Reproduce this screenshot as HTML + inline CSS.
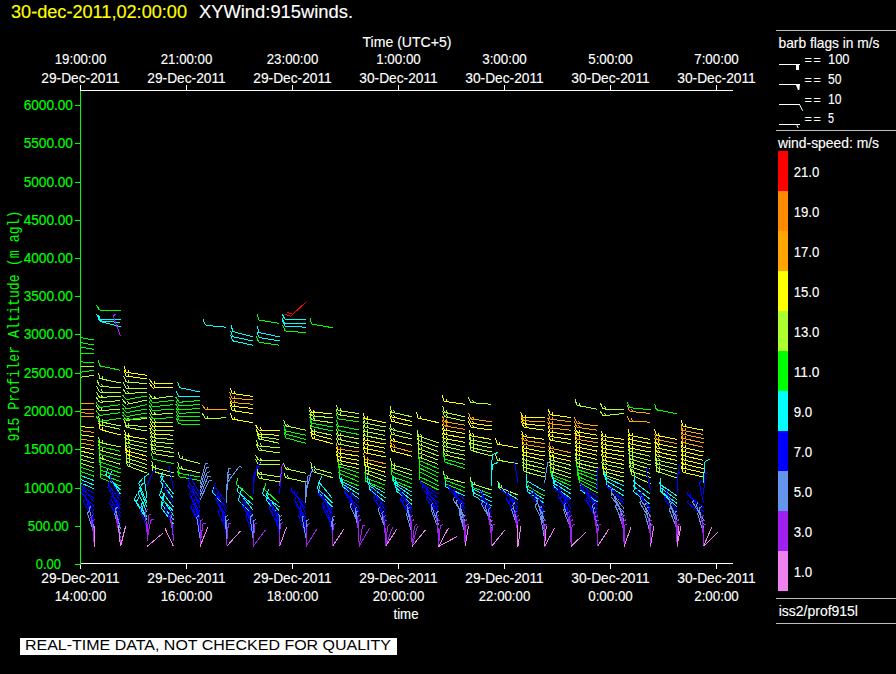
<!DOCTYPE html>
<html><head><meta charset="utf-8"><title>XYWind:915winds</title>
<style>
html,body{margin:0;padding:0;background:#000;overflow:hidden}
svg{display:block;font-family:"Liberation Sans", sans-serif;}
</style></head>
<body>
<svg width="896" height="674" viewBox="0 0 896 674">
<rect width="896" height="674" fill="#000"/>
<text x="11" y="17.5" font-size="18" fill="#ffff00" stroke="#ffff00" stroke-width="0.15" textLength="176" lengthAdjust="spacingAndGlyphs">30-dec-2011,02:00:00</text>
<text x="199" y="17.5" font-size="18" fill="#fff" stroke="#fff" stroke-width="0.15" textLength="154" lengthAdjust="spacingAndGlyphs">XYWind:915winds.</text>
<text x="362.5" y="47" font-size="15" fill="#fff" stroke="#fff" stroke-width="0.15" textLength="89" lengthAdjust="spacingAndGlyphs">Time (UTC+5)</text>
<text x="80.5" y="64" font-size="15" fill="#fff" stroke="#fff" stroke-width="0.15" text-anchor="middle" textLength="51.5" lengthAdjust="spacingAndGlyphs">19:00:00</text>
<text x="80.5" y="83" font-size="15" fill="#fff" stroke="#fff" stroke-width="0.15" text-anchor="middle" textLength="78.5" lengthAdjust="spacingAndGlyphs">29-Dec-2011</text>
<rect x="80" y="85" width="1" height="5" fill="#fff"/>
<text x="186.5" y="64" font-size="15" fill="#fff" stroke="#fff" stroke-width="0.15" text-anchor="middle" textLength="51.5" lengthAdjust="spacingAndGlyphs">21:00:00</text>
<text x="186.5" y="83" font-size="15" fill="#fff" stroke="#fff" stroke-width="0.15" text-anchor="middle" textLength="78.5" lengthAdjust="spacingAndGlyphs">29-Dec-2011</text>
<rect x="186" y="85" width="1" height="5" fill="#fff"/>
<text x="292.5" y="64" font-size="15" fill="#fff" stroke="#fff" stroke-width="0.15" text-anchor="middle" textLength="51.5" lengthAdjust="spacingAndGlyphs">23:00:00</text>
<text x="292.5" y="83" font-size="15" fill="#fff" stroke="#fff" stroke-width="0.15" text-anchor="middle" textLength="78.5" lengthAdjust="spacingAndGlyphs">29-Dec-2011</text>
<rect x="292" y="85" width="1" height="5" fill="#fff"/>
<text x="398.5" y="64" font-size="15" fill="#fff" stroke="#fff" stroke-width="0.15" text-anchor="middle" textLength="44.5" lengthAdjust="spacingAndGlyphs">1:00:00</text>
<text x="398.5" y="83" font-size="15" fill="#fff" stroke="#fff" stroke-width="0.15" text-anchor="middle" textLength="78.5" lengthAdjust="spacingAndGlyphs">30-Dec-2011</text>
<rect x="398" y="85" width="1" height="5" fill="#fff"/>
<text x="504.5" y="64" font-size="15" fill="#fff" stroke="#fff" stroke-width="0.15" text-anchor="middle" textLength="44.5" lengthAdjust="spacingAndGlyphs">3:00:00</text>
<text x="504.5" y="83" font-size="15" fill="#fff" stroke="#fff" stroke-width="0.15" text-anchor="middle" textLength="78.5" lengthAdjust="spacingAndGlyphs">30-Dec-2011</text>
<rect x="504" y="85" width="1" height="5" fill="#fff"/>
<text x="610.5" y="64" font-size="15" fill="#fff" stroke="#fff" stroke-width="0.15" text-anchor="middle" textLength="44.5" lengthAdjust="spacingAndGlyphs">5:00:00</text>
<text x="610.5" y="83" font-size="15" fill="#fff" stroke="#fff" stroke-width="0.15" text-anchor="middle" textLength="78.5" lengthAdjust="spacingAndGlyphs">30-Dec-2011</text>
<rect x="610" y="85" width="1" height="5" fill="#fff"/>
<text x="716.5" y="64" font-size="15" fill="#fff" stroke="#fff" stroke-width="0.15" text-anchor="middle" textLength="44.5" lengthAdjust="spacingAndGlyphs">7:00:00</text>
<text x="716.5" y="83" font-size="15" fill="#fff" stroke="#fff" stroke-width="0.15" text-anchor="middle" textLength="78.5" lengthAdjust="spacingAndGlyphs">30-Dec-2011</text>
<rect x="716" y="85" width="1" height="5" fill="#fff"/>
<rect x="80" y="90" width="653" height="1" fill="#fff"/>
<text x="80.5" y="582.5" font-size="15" fill="#fff" stroke="#fff" stroke-width="0.15" text-anchor="middle" textLength="78.5" lengthAdjust="spacingAndGlyphs">29-Dec-2011</text>
<text x="80.5" y="600.5" font-size="15" fill="#fff" stroke="#fff" stroke-width="0.15" text-anchor="middle" textLength="51.5" lengthAdjust="spacingAndGlyphs">14:00:00</text>
<rect x="80" y="563" width="1" height="6" fill="#fff"/>
<text x="186.5" y="582.5" font-size="15" fill="#fff" stroke="#fff" stroke-width="0.15" text-anchor="middle" textLength="78.5" lengthAdjust="spacingAndGlyphs">29-Dec-2011</text>
<text x="186.5" y="600.5" font-size="15" fill="#fff" stroke="#fff" stroke-width="0.15" text-anchor="middle" textLength="51.5" lengthAdjust="spacingAndGlyphs">16:00:00</text>
<rect x="186" y="563" width="1" height="6" fill="#fff"/>
<text x="292.5" y="582.5" font-size="15" fill="#fff" stroke="#fff" stroke-width="0.15" text-anchor="middle" textLength="78.5" lengthAdjust="spacingAndGlyphs">29-Dec-2011</text>
<text x="292.5" y="600.5" font-size="15" fill="#fff" stroke="#fff" stroke-width="0.15" text-anchor="middle" textLength="51.5" lengthAdjust="spacingAndGlyphs">18:00:00</text>
<rect x="292" y="563" width="1" height="6" fill="#fff"/>
<text x="398.5" y="582.5" font-size="15" fill="#fff" stroke="#fff" stroke-width="0.15" text-anchor="middle" textLength="78.5" lengthAdjust="spacingAndGlyphs">29-Dec-2011</text>
<text x="398.5" y="600.5" font-size="15" fill="#fff" stroke="#fff" stroke-width="0.15" text-anchor="middle" textLength="51.5" lengthAdjust="spacingAndGlyphs">20:00:00</text>
<rect x="398" y="563" width="1" height="6" fill="#fff"/>
<text x="504.5" y="582.5" font-size="15" fill="#fff" stroke="#fff" stroke-width="0.15" text-anchor="middle" textLength="78.5" lengthAdjust="spacingAndGlyphs">29-Dec-2011</text>
<text x="504.5" y="600.5" font-size="15" fill="#fff" stroke="#fff" stroke-width="0.15" text-anchor="middle" textLength="51.5" lengthAdjust="spacingAndGlyphs">22:00:00</text>
<rect x="504" y="563" width="1" height="6" fill="#fff"/>
<text x="610.5" y="582.5" font-size="15" fill="#fff" stroke="#fff" stroke-width="0.15" text-anchor="middle" textLength="78.5" lengthAdjust="spacingAndGlyphs">30-Dec-2011</text>
<text x="610.5" y="600.5" font-size="15" fill="#fff" stroke="#fff" stroke-width="0.15" text-anchor="middle" textLength="44.5" lengthAdjust="spacingAndGlyphs">0:00:00</text>
<rect x="610" y="563" width="1" height="6" fill="#fff"/>
<text x="716.5" y="582.5" font-size="15" fill="#fff" stroke="#fff" stroke-width="0.15" text-anchor="middle" textLength="78.5" lengthAdjust="spacingAndGlyphs">30-Dec-2011</text>
<text x="716.5" y="600.5" font-size="15" fill="#fff" stroke="#fff" stroke-width="0.15" text-anchor="middle" textLength="44.5" lengthAdjust="spacingAndGlyphs">2:00:00</text>
<rect x="716" y="563" width="1" height="6" fill="#fff"/>
<rect x="80" y="563" width="653" height="1" fill="#fff"/>
<text x="393.5" y="618.7" font-size="15" fill="#fff" stroke="#fff" stroke-width="0.15" textLength="25" lengthAdjust="spacingAndGlyphs">time</text>
<rect x="80" y="91" width="1" height="474" fill="#00ff00"/>
<rect x="75" y="564" width="5" height="1" fill="#00ff00"/>
<text x="48.3" y="569.2" font-size="15" fill="#00ff00" stroke="#00ff00" stroke-width="0.15" text-anchor="middle" textLength="25.2" lengthAdjust="spacingAndGlyphs">0.00</text>
<rect x="75" y="526" width="5" height="1" fill="#00ff00"/>
<text x="48.3" y="531.2" font-size="15" fill="#00ff00" stroke="#00ff00" stroke-width="0.15" text-anchor="middle" textLength="41" lengthAdjust="spacingAndGlyphs">500.00</text>
<rect x="75" y="488" width="5" height="1" fill="#00ff00"/>
<text x="48.3" y="493.2" font-size="15" fill="#00ff00" stroke="#00ff00" stroke-width="0.15" text-anchor="middle" textLength="49.3" lengthAdjust="spacingAndGlyphs">1000.00</text>
<rect x="75" y="449" width="5" height="1" fill="#00ff00"/>
<text x="48.3" y="454.2" font-size="15" fill="#00ff00" stroke="#00ff00" stroke-width="0.15" text-anchor="middle" textLength="49.3" lengthAdjust="spacingAndGlyphs">1500.00</text>
<rect x="75" y="411" width="5" height="1" fill="#00ff00"/>
<text x="48.3" y="416.2" font-size="15" fill="#00ff00" stroke="#00ff00" stroke-width="0.15" text-anchor="middle" textLength="49.3" lengthAdjust="spacingAndGlyphs">2000.00</text>
<rect x="75" y="373" width="5" height="1" fill="#00ff00"/>
<text x="48.3" y="378.2" font-size="15" fill="#00ff00" stroke="#00ff00" stroke-width="0.15" text-anchor="middle" textLength="49.3" lengthAdjust="spacingAndGlyphs">2500.00</text>
<rect x="75" y="334" width="5" height="1" fill="#00ff00"/>
<text x="48.3" y="339.2" font-size="15" fill="#00ff00" stroke="#00ff00" stroke-width="0.15" text-anchor="middle" textLength="49.3" lengthAdjust="spacingAndGlyphs">3000.00</text>
<rect x="75" y="296" width="5" height="1" fill="#00ff00"/>
<text x="48.3" y="301.2" font-size="15" fill="#00ff00" stroke="#00ff00" stroke-width="0.15" text-anchor="middle" textLength="49.3" lengthAdjust="spacingAndGlyphs">3500.00</text>
<rect x="75" y="258" width="5" height="1" fill="#00ff00"/>
<text x="48.3" y="263.2" font-size="15" fill="#00ff00" stroke="#00ff00" stroke-width="0.15" text-anchor="middle" textLength="49.3" lengthAdjust="spacingAndGlyphs">4000.00</text>
<rect x="75" y="220" width="5" height="1" fill="#00ff00"/>
<text x="48.3" y="225.2" font-size="15" fill="#00ff00" stroke="#00ff00" stroke-width="0.15" text-anchor="middle" textLength="49.3" lengthAdjust="spacingAndGlyphs">4500.00</text>
<rect x="75" y="182" width="5" height="1" fill="#00ff00"/>
<text x="48.3" y="187.2" font-size="15" fill="#00ff00" stroke="#00ff00" stroke-width="0.15" text-anchor="middle" textLength="49.3" lengthAdjust="spacingAndGlyphs">5000.00</text>
<rect x="75" y="143" width="5" height="1" fill="#00ff00"/>
<text x="48.3" y="148.2" font-size="15" fill="#00ff00" stroke="#00ff00" stroke-width="0.15" text-anchor="middle" textLength="49.3" lengthAdjust="spacingAndGlyphs">5500.00</text>
<rect x="75" y="105" width="5" height="1" fill="#00ff00"/>
<text x="48.3" y="110.2" font-size="15" fill="#00ff00" stroke="#00ff00" stroke-width="0.15" text-anchor="middle" textLength="49.3" lengthAdjust="spacingAndGlyphs">6000.00</text>
<text transform="translate(19.3,441.5) rotate(-90) scale(1,1.25)" font-family='"Liberation Mono", monospace' font-size="13.2" fill="#00ff00" textLength="231" lengthAdjust="spacing">915 Profiler Altitude (m agl)</text>
<rect x="776" y="30" width="120" height="1" fill="#bebebe"/>
<text x="778.5" y="47.5" font-size="15" fill="#fff" stroke="#fff" stroke-width="0.15" textLength="101" lengthAdjust="spacingAndGlyphs">barb flags in m/s</text>
<text x="804.6" y="63.7" font-size="12.5" fill="#fff" stroke="#fff" stroke-width="0.15" letter-spacing="1.7">==</text>
<text x="828" y="63.7" font-size="15" fill="#fff" stroke="#fff" stroke-width="0.15" textLength="21.5" lengthAdjust="spacingAndGlyphs">100</text>
<text x="804.6" y="83.7" font-size="12.5" fill="#fff" stroke="#fff" stroke-width="0.15" letter-spacing="1.7">==</text>
<text x="828" y="83.7" font-size="15" fill="#fff" stroke="#fff" stroke-width="0.15" textLength="13.5" lengthAdjust="spacingAndGlyphs">50</text>
<text x="804.6" y="103.7" font-size="12.5" fill="#fff" stroke="#fff" stroke-width="0.15" letter-spacing="1.7">==</text>
<text x="828" y="103.7" font-size="15" fill="#fff" stroke="#fff" stroke-width="0.15" textLength="13.5" lengthAdjust="spacingAndGlyphs">10</text>
<text x="804.6" y="123.2" font-size="12.5" fill="#fff" stroke="#fff" stroke-width="0.15" letter-spacing="1.7">==</text>
<text x="828" y="123.2" font-size="15" fill="#fff" stroke="#fff" stroke-width="0.15" textLength="6" lengthAdjust="spacingAndGlyphs">5</text>
<rect x="779" y="64" width="21" height="1" fill="#fff"/>
<rect x="796" y="64" width="3" height="6" fill="#fff"/>
<rect x="779" y="84" width="21" height="1" fill="#fff"/>
<path d="M795.5 84 L800 84 L799.3 90 L798 90 Z" fill="#fff"/>
<rect x="779" y="104" width="21" height="1" fill="#fff"/>
<path d="M799.5 104.5 L802.7 110.8" stroke="#fff" stroke-width="1" fill="none"/>
<rect x="779" y="124" width="21" height="1" fill="#fff"/>
<path d="M796.5 124.5 L798.2 128" stroke="#fff" stroke-width="1" fill="none"/>
<rect x="776" y="130" width="120" height="1" fill="#bebebe"/>
<text x="778" y="147.5" font-size="15" fill="#fff" stroke="#fff" stroke-width="0.15" textLength="101" lengthAdjust="spacingAndGlyphs">wind-speed: m/s</text>
<rect x="778" y="151" width="10" height="40" fill="#ff0000"/>
<text x="793.7" y="176.7" font-size="15" fill="#fff" stroke="#fff" stroke-width="0.15" textLength="25.7" lengthAdjust="spacingAndGlyphs">21.0</text>
<rect x="778" y="191" width="10" height="40" fill="#ff8c00"/>
<text x="793.7" y="216.7" font-size="15" fill="#fff" stroke="#fff" stroke-width="0.15" textLength="25.7" lengthAdjust="spacingAndGlyphs">19.0</text>
<rect x="778" y="231" width="10" height="40" fill="#ffa500"/>
<text x="793.7" y="256.7" font-size="15" fill="#fff" stroke="#fff" stroke-width="0.15" textLength="25.7" lengthAdjust="spacingAndGlyphs">17.0</text>
<rect x="778" y="271" width="10" height="40" fill="#ffff00"/>
<text x="793.7" y="296.7" font-size="15" fill="#fff" stroke="#fff" stroke-width="0.15" textLength="25.7" lengthAdjust="spacingAndGlyphs">15.0</text>
<rect x="778" y="311" width="10" height="40" fill="#adff2f"/>
<text x="793.7" y="336.7" font-size="15" fill="#fff" stroke="#fff" stroke-width="0.15" textLength="25.7" lengthAdjust="spacingAndGlyphs">13.0</text>
<rect x="778" y="351" width="10" height="40" fill="#00ff00"/>
<text x="793.7" y="376.7" font-size="15" fill="#fff" stroke="#fff" stroke-width="0.15" textLength="25.7" lengthAdjust="spacingAndGlyphs">11.0</text>
<rect x="778" y="391" width="10" height="40" fill="#00ffff"/>
<text x="793.7" y="416.7" font-size="15" fill="#fff" stroke="#fff" stroke-width="0.15" textLength="18.5" lengthAdjust="spacingAndGlyphs">9.0</text>
<rect x="778" y="431" width="10" height="40" fill="#0000ff"/>
<text x="793.7" y="456.7" font-size="15" fill="#fff" stroke="#fff" stroke-width="0.15" textLength="18.5" lengthAdjust="spacingAndGlyphs">7.0</text>
<rect x="778" y="471" width="10" height="40" fill="#6495ed"/>
<text x="793.7" y="496.7" font-size="15" fill="#fff" stroke="#fff" stroke-width="0.15" textLength="18.5" lengthAdjust="spacingAndGlyphs">5.0</text>
<rect x="778" y="511" width="10" height="40" fill="#a020f0"/>
<text x="793.7" y="536.7" font-size="15" fill="#fff" stroke="#fff" stroke-width="0.15" textLength="18.5" lengthAdjust="spacingAndGlyphs">3.0</text>
<rect x="778" y="551" width="10" height="40" fill="#ee82ee"/>
<text x="793.7" y="576.7" font-size="15" fill="#fff" stroke="#fff" stroke-width="0.15" textLength="18.5" lengthAdjust="spacingAndGlyphs">1.0</text>
<rect x="776" y="598" width="120" height="1" fill="#bebebe"/>
<text x="778.7" y="615.5" font-size="15" fill="#fff" stroke="#fff" stroke-width="0.15" textLength="79.3" lengthAdjust="spacingAndGlyphs">iss2/prof915l</text>
<rect x="776" y="623" width="120" height="1" fill="#bebebe"/>
<rect x="20" y="638" width="377" height="17" fill="#fff"/>
<text x="25" y="649.5" font-size="15.5" fill="#000" textLength="366" lengthAdjust="spacingAndGlyphs">REAL-TIME DATA, NOT CHECKED FOR QUALITY</text>
<defs><clipPath id="pc"><rect x="81" y="91" width="652" height="472"/></clipPath></defs>
<g clip-path="url(#pc)" fill="none" stroke-width="1" shape-rendering="crispEdges">
<path stroke="#ff0000" d="M306.0 302.0L290.6 316.3M290.6 316.3L284.7 314.3M292.8 314.3L286.9 312.2"/>
<path stroke="#ff8c00" d="M94.0 413.5L73.0 412.4M73.0 412.4L70.4 406.7M76.0 412.6L73.4 406.8M465.0 429.4L444.3 425.8M444.3 425.8L442.4 419.8M447.3 426.3L445.3 420.3"/>
<path stroke="#ffa500" d="M94.0 404.0L73.0 402.9M73.0 402.9L70.4 397.2M76.0 403.1L74.8 400.3M94.0 410.0L73.1 408.5M73.1 408.5L70.5 402.8M76.0 408.7L74.8 406.0M94.0 417.0L73.1 415.5M73.1 415.5L70.5 409.8M76.0 415.7L74.8 413.0M94.0 432.4L73.2 429.7M73.2 429.7L70.9 423.9M76.1 430.1L75.1 427.3M94.0 441.2L73.3 437.6M73.3 437.6L71.3 431.6M76.3 438.1L75.3 435.3M94.0 445.5L73.4 441.6M73.4 441.6L71.5 435.5M76.3 442.1L75.4 439.3M226.5 409.3L205.5 410.0M205.5 410.0L202.4 404.6M208.5 409.9L207.0 407.3M253.0 400.0L232.1 398.2M232.1 398.2L229.6 392.4M235.1 398.4L233.9 395.7M253.0 404.3L232.1 402.5M232.1 402.5L229.6 396.7M235.1 402.7L233.9 400.0M359.0 452.0L338.2 449.1M338.2 449.1L336.0 443.2M341.2 449.5L340.1 446.7M385.5 463.7L365.0 459.0M365.0 459.0L363.4 452.9M368.0 459.7L367.2 456.8M412.0 452.0L391.7 446.6M391.7 446.6L390.3 440.4M394.6 447.3L393.9 444.4M465.0 425.2L444.3 421.6M444.3 421.6L442.4 415.6M447.3 422.1L446.3 419.2M491.5 421.8L470.7 418.9M470.7 418.9L468.5 413.0M473.7 419.3L472.6 416.5M544.5 421.8L523.5 420.7M523.5 420.7L520.9 415.0M526.5 420.9L525.3 418.1M544.5 443.6L523.8 440.3M523.8 440.3L521.7 434.4M526.7 440.8L525.7 437.9M544.5 447.8L523.8 444.2M523.8 444.2L521.9 438.2M526.8 444.7L525.8 441.8M571.0 421.8L550.2 419.2M550.2 419.2L547.9 413.4M553.1 419.6L552.1 416.8M571.0 426.0L550.1 423.8M550.1 423.8L547.8 418.0M553.1 424.1L552.0 421.3M571.0 430.2L550.1 428.0M550.1 428.0L547.8 422.2M553.1 428.3L552.0 425.5M571.0 452.8L550.5 448.1M550.5 448.1L548.9 442.0M553.5 448.8L552.7 445.9M597.5 426.0L576.7 423.1M576.7 423.1L574.5 417.2M579.7 423.5L578.6 420.7M597.5 430.2L576.7 427.3M576.7 427.3L574.5 421.4M579.7 427.7L578.6 424.9M597.5 442.8L576.8 439.2M576.8 439.2L574.9 433.2M579.8 439.7L578.8 436.8M650.5 413.5L629.6 411.3M629.6 411.3L627.3 405.5M632.6 411.6L631.5 408.8M650.5 422.2L629.5 421.1M629.5 421.1L626.9 415.4M632.5 421.3L631.3 418.5M677.0 443.6L656.4 439.6M656.4 439.6L654.5 433.6M659.3 440.2L658.5 437.3M703.5 434.4L682.9 430.4M682.9 430.4L681.0 424.4M685.8 431.0L685.0 428.1M703.5 438.6L683.0 434.2M683.0 434.2L681.2 428.2M685.9 434.9L685.1 432.0M703.5 442.8L683.0 438.4M683.0 438.4L681.2 432.4M685.9 439.1L685.1 436.2M703.5 447.3L683.0 442.6M683.0 442.6L681.4 436.5M686.0 443.3L685.2 440.4"/>
<path stroke="#ffff00" d="M94.0 428.0L73.1 425.8M73.1 425.8L70.8 420.0M76.1 426.1L75.0 423.3M94.0 436.8L73.2 433.7M73.2 433.7L71.1 427.7M76.2 434.1L75.2 431.3M94.0 449.9L73.5 445.5M73.5 445.5L71.8 439.4M76.4 446.1L75.6 443.2M94.0 454.3L73.6 449.4M73.6 449.4L72.0 443.4M76.5 450.1L75.7 447.2M120.5 435.0L100.2 429.6M100.2 429.6L98.8 423.4M103.1 430.3L102.4 427.4M147.0 375.3L126.2 372.4M126.2 372.4L124.0 366.5M129.2 372.8L128.1 370.0M147.0 379.0L126.2 376.1M126.2 376.1L124.0 370.2M129.2 376.5L128.1 373.7M147.0 439.4L126.3 435.8M126.3 435.8L124.4 429.8M129.3 436.3L128.3 433.4M147.0 456.2L126.7 450.8M126.7 450.8L125.3 444.6M129.6 451.5L128.9 448.6M147.0 460.4L126.8 454.5M126.8 454.5L125.6 448.4M129.7 455.4L129.1 452.4M173.5 383.0L152.5 384.1M152.5 384.1L149.3 378.7M155.5 383.9L154.0 381.4M173.5 387.0L152.5 388.1M152.5 388.1L149.3 382.7M155.5 387.9L154.0 385.4M173.5 426.5L152.5 426.1M152.5 426.1L149.6 420.5M155.5 426.2L154.1 423.5M173.5 435.2L152.5 433.9M152.5 433.9L149.9 428.2M155.5 434.1L154.3 431.4M253.0 396.4L232.2 393.5M232.2 393.5L230.0 387.6M235.2 393.9L234.1 391.1M253.0 408.5L232.1 406.3M232.1 406.3L229.8 400.5M235.1 406.6L234.0 403.8M253.0 413.5L232.2 410.6M232.2 410.6L230.0 404.7M235.2 411.0L234.1 408.2M253.0 422.7L232.3 419.1M232.3 419.1L230.4 413.1M235.3 419.6L234.3 416.7M279.5 430.2L258.5 430.2M258.5 430.2L255.5 424.6M261.5 430.2L260.1 427.6M279.5 435.3L258.5 434.2M258.5 434.2L255.9 428.5M261.5 434.4L260.3 431.6M332.5 413.5L311.5 412.4M311.5 412.4L308.9 406.7M314.5 412.6L313.3 409.8M332.5 439.5L312.2 434.1M312.2 434.1L310.8 427.9M315.1 434.8L314.4 431.9M332.5 443.6L312.2 438.2M312.2 438.2L310.8 432.0M315.1 438.9L314.4 436.0M359.0 456.2L338.3 452.9M338.3 452.9L336.2 447.0M341.2 453.4L340.2 450.5M359.0 460.4L338.3 456.7M338.3 456.7L336.4 450.7M341.3 457.2L340.3 454.4M359.0 464.5L338.4 460.5M338.4 460.5L336.5 454.5M341.3 461.1L340.5 458.2M385.5 422.7L364.9 418.7M364.9 418.7L363.0 412.7M367.8 419.3L367.0 416.4M385.5 444.0L364.9 440.0M364.9 440.0L363.0 434.0M367.8 440.6L367.0 437.7M385.5 448.3L364.9 444.3M364.9 444.3L363.0 438.2M367.8 444.8L367.0 442.0M385.5 452.5L364.9 448.5M364.9 448.5L363.0 442.5M367.8 449.1L367.0 446.2M385.5 456.8L364.9 452.8M364.9 452.8L363.0 446.8M367.8 453.4L367.0 450.5M385.5 468.0L365.2 462.6M365.2 462.6L363.8 456.4M368.1 463.3L367.4 460.4M385.5 472.3L365.4 466.2M365.4 466.2L364.2 460.0M368.3 467.0L367.7 464.1M412.0 421.5L391.5 416.8M391.5 416.8L389.9 410.7M394.5 417.5L393.7 414.6M412.0 426.0L391.5 421.3M391.5 421.3L389.9 415.2M394.5 422.0L393.7 419.1M412.0 445.3L391.5 440.6M391.5 440.6L389.9 434.5M394.5 441.3L393.7 438.4M412.0 456.2L391.7 450.8M391.7 450.8L390.3 444.6M394.6 451.5L393.9 448.6M438.5 422.7L418.0 418.0M418.0 418.0L416.4 411.9M421.0 418.7L420.2 415.8M465.0 404.3L444.2 401.4M444.2 401.4L442.0 395.5M447.2 401.8L446.1 399.0M465.0 433.6L444.3 430.0M444.3 430.0L442.4 424.0M447.3 430.5L446.3 427.6M465.0 438.0L444.3 434.4M444.3 434.4L442.4 428.4M447.3 434.9L446.3 432.0M465.0 442.3L444.3 438.7M444.3 438.7L442.4 432.7M447.3 439.2L446.3 436.3M491.5 426.0L470.7 423.1M470.7 423.1L468.5 417.2M473.7 423.5L472.6 420.7M491.5 430.0L470.7 427.1M470.7 427.1L468.5 421.2M473.7 427.5L472.6 424.7M491.5 439.4L470.8 435.8M470.8 435.8L468.9 429.8M473.8 436.3L472.8 433.4M518.0 447.8L497.3 444.2M497.3 444.2L495.4 438.2M500.3 444.7L499.3 441.8M544.5 417.6L523.5 417.6M523.5 417.6L520.5 412.0M526.5 417.6L525.1 415.0M544.5 426.0L523.6 423.8M523.6 423.8L521.3 418.0M526.6 424.1L525.5 421.3M544.5 430.2L523.7 427.3M523.7 427.3L521.5 421.4M526.7 427.7L525.6 424.9M544.5 439.4L523.7 436.5M523.7 436.5L521.5 430.6M526.7 436.9L525.6 434.1M544.5 452.0L523.9 448.0M523.9 448.0L522.0 442.0M526.8 448.6L526.0 445.7M544.5 456.0L523.9 452.0M523.9 452.0L522.0 446.0M526.8 452.6L526.0 449.7M544.5 460.3L524.0 455.6M524.0 455.6L522.4 449.5M527.0 456.3L526.2 453.4M571.0 417.6L550.2 414.7M550.2 414.7L548.0 408.8M553.2 415.1L552.1 412.3M571.0 435.0L550.2 432.1M550.2 432.1L548.0 426.2M553.2 432.5L552.1 429.7M571.0 439.4L550.2 436.5M550.2 436.5L548.0 430.6M553.2 436.9L552.1 434.1M571.0 443.6L550.3 440.3M550.3 440.3L548.2 434.4M553.2 440.8L552.2 437.9M571.0 457.0L550.5 452.3M550.5 452.3L548.9 446.2M553.5 453.0L552.7 450.1M571.0 461.2L550.5 456.5M550.5 456.5L548.9 450.4M553.5 457.2L552.7 454.3M597.5 435.2L576.8 431.9M576.8 431.9L574.7 426.0M579.7 432.4L578.7 429.5M597.5 439.0L576.8 435.7M576.8 435.7L574.7 429.8M579.7 436.2L578.7 433.3M597.5 447.0L576.9 443.0M576.9 443.0L575.0 437.0M579.8 443.6L579.0 440.7M597.5 451.2L576.9 446.9M576.9 446.9L575.2 440.9M579.9 447.5L579.0 444.6M597.5 455.3L577.0 450.8M577.0 450.8L575.3 444.8M579.9 451.5L579.1 448.6M597.5 459.5L577.0 454.8M577.0 454.8L575.4 448.7M580.0 455.5L579.2 452.6M624.0 439.4L603.2 436.5M603.2 436.5L601.0 430.6M606.2 436.9L605.1 434.1M624.0 443.6L603.2 440.5M603.2 440.5L601.1 434.5M606.2 440.9L605.2 438.1M624.0 447.8L603.3 444.5M603.3 444.5L601.2 438.5M606.2 445.0L605.2 442.1M624.0 451.9L603.3 448.5M603.3 448.5L601.3 442.5M606.2 449.0L605.3 446.1M624.0 456.1L603.3 452.5M603.3 452.5L601.4 446.5M606.3 453.0L605.3 450.2M624.0 460.3L603.4 456.5M603.4 456.5L601.5 450.5M606.3 457.0L605.4 454.2M624.0 464.5L603.4 460.5M603.4 460.5L601.5 454.5M606.3 461.1L605.5 458.2M624.0 473.0L603.5 468.3M603.5 468.3L601.9 462.2M606.5 469.0L605.7 466.1M650.5 439.4L629.9 435.4M629.9 435.4L628.0 429.4M632.8 436.0L632.0 433.1M650.5 443.6L629.9 439.6M629.9 439.6L628.0 433.6M632.8 440.2L632.0 437.3M650.5 447.8L629.9 443.8M629.9 443.8L628.0 437.8M632.8 444.4L632.0 441.5M650.5 452.0L629.9 448.0M629.9 448.0L628.0 442.0M632.8 448.6L632.0 445.7M677.0 439.4L656.4 435.4M656.4 435.4L654.5 429.4M659.3 436.0L658.5 433.1M677.0 447.8L656.4 443.8M656.4 443.8L654.5 437.8M659.3 444.4L658.5 441.5M677.0 452.0L656.4 447.8M656.4 447.8L654.7 441.7M659.4 448.4L658.5 445.5M677.0 456.3L656.5 451.8M656.5 451.8L654.8 445.7M659.4 452.4L658.6 449.5M677.0 460.5L656.5 455.8M656.5 455.8L654.9 449.7M659.5 456.5L658.7 453.6M703.5 430.2L682.9 426.2M682.9 426.2L681.0 420.2M685.8 426.8L685.0 423.9M703.5 452.0L683.0 447.3M683.0 447.3L681.4 441.2M686.0 448.0L685.2 445.1M703.5 456.2L683.0 451.4M683.0 451.4L681.4 445.4M686.0 452.1L685.2 449.2M703.5 460.3L683.0 455.6M683.0 455.6L681.4 449.5M686.0 456.3L685.2 453.4M703.5 464.5L683.0 459.8M683.0 459.8L681.4 453.7M686.0 460.5L685.2 457.6M703.5 468.7L683.0 463.9M683.0 463.9L681.4 457.9M686.0 464.6L685.2 461.7M703.5 472.8L683.0 468.1M683.0 468.1L681.4 462.0M686.0 468.8L685.2 465.9M703.5 477.0L683.0 472.3M683.0 472.3L681.4 466.2M686.0 473.0L685.2 470.1"/>
<path stroke="#adff2f" d="M94.0 366.6L73.0 366.6M73.0 366.6L70.0 361.0M76.0 366.6L74.6 364.0M94.0 375.3L73.2 378.2M73.2 378.2L69.5 373.1M76.2 377.8L74.4 375.4M94.0 458.7L73.7 453.4M73.7 453.4L72.2 447.3M76.6 454.2L75.9 451.2M94.0 463.1L73.8 457.3M73.8 457.3L72.5 451.2M76.7 458.2L76.1 455.2M94.0 467.5L73.9 461.3M73.9 461.3L72.7 455.1M76.8 462.2L76.2 459.2M120.5 383.0L100.0 378.6M100.0 378.6L98.2 372.6M102.9 379.3L102.1 376.4M120.5 388.0L99.6 386.2M99.6 386.2L97.1 380.4M102.6 386.4L101.4 383.7M120.5 392.0L99.5 392.0M99.5 392.0L96.5 386.4M102.5 392.0L101.1 389.4M120.5 396.3L99.5 397.4M99.5 397.4L96.3 392.0M102.5 397.2L101.0 394.7M120.5 400.5L99.6 402.3M99.6 402.3L96.1 397.0M102.6 402.1L100.9 399.6M120.5 409.0L99.6 410.8M99.6 410.8L96.1 405.5M102.6 410.6L100.9 408.1M120.5 426.0L100.0 421.6M100.0 421.6L98.2 415.6M102.9 422.3L102.1 419.4M120.5 429.3L100.0 424.9M100.0 424.9L98.2 418.9M102.9 425.6L102.1 422.7M120.5 447.0L100.0 442.6M100.0 442.6L98.2 436.6M102.9 443.3L102.1 440.4M120.5 455.7L100.1 450.5M100.1 450.5L98.6 444.4M103.1 451.2L102.3 448.3M120.5 464.3L100.4 458.4M100.4 458.4L99.1 452.2M103.2 459.2L102.6 456.3M147.0 383.7L126.1 381.9M126.1 381.9L123.6 376.1M129.1 382.1L127.9 379.4M147.0 388.0L126.0 388.0M126.0 388.0L123.0 382.4M129.0 388.0L127.6 385.4M147.0 392.0L126.1 393.8M126.1 393.8L122.6 388.5M129.1 393.6L127.4 391.1M147.0 400.0L126.5 404.4M126.5 404.4L122.4 399.5M129.4 403.7L127.5 401.4M147.0 418.5L126.1 420.3M126.1 420.3L122.6 415.0M129.1 420.1L127.4 417.6M147.0 426.8L126.1 425.0M126.1 425.0L123.6 419.2M129.1 425.2L127.9 422.5M147.0 431.0L126.3 427.4M126.3 427.4L124.4 421.4M129.3 427.9L128.3 425.0M147.0 443.6L126.4 439.5M126.4 439.5L124.6 433.5M129.3 440.1L128.5 437.2M147.0 447.8L126.5 443.3M126.5 443.3L124.8 437.2M129.4 443.9L128.6 441.0M147.0 452.0L126.6 447.0M126.6 447.0L125.1 440.9M129.5 447.7L128.8 444.8M147.0 464.6L127.0 458.3M127.0 458.3L125.8 452.1M129.8 459.2L129.3 456.2M147.0 468.8L127.1 462.0M127.1 462.0L126.1 455.8M130.0 463.0L129.5 460.1M147.0 473.0L127.3 465.8M127.3 465.8L126.4 459.6M130.1 466.8L129.7 463.9M173.5 396.0L152.7 398.9M152.7 398.9L149.0 393.8M155.7 398.5L153.9 396.1M173.5 413.4L152.5 414.5M152.5 414.5L149.3 409.1M155.5 414.3L154.0 411.8M173.5 422.1L152.5 422.2M152.5 422.2L149.5 416.7M155.5 422.2L154.1 419.6M173.5 430.9L152.5 430.0M152.5 430.0L149.8 424.3M155.5 430.1L154.2 427.4M173.5 439.6L152.6 437.8M152.6 437.8L150.1 432.0M155.6 438.0L154.4 435.3M173.5 443.9L152.6 441.7M152.6 441.7L150.3 435.8M155.6 442.0L154.5 439.2M173.5 448.3L152.7 445.6M152.7 445.6L150.5 439.7M155.7 446.0L154.6 443.1M173.5 452.6L152.7 449.5M152.7 449.5L150.7 443.5M155.7 449.9L154.7 447.1M173.5 457.0L152.8 453.4M152.8 453.4L150.9 447.4M155.8 453.9L154.8 451.0M173.5 472.8L153.2 467.4M153.2 467.4L151.8 461.2M156.1 468.1L155.4 465.2M173.5 477.0L153.2 471.6M153.2 471.6L151.8 465.4M156.1 472.3L155.4 469.4M200.0 463.6L179.7 458.2M179.7 458.2L178.3 452.0M182.6 458.9L181.9 456.0M200.0 472.8L179.5 468.4M179.5 468.4L177.7 462.4M182.4 469.1L181.6 466.2M226.5 417.7L205.5 418.8M205.5 418.8L202.3 413.4M208.5 418.6L207.0 416.1M279.5 439.5L258.7 436.6M258.7 436.6L256.5 430.7M261.7 437.0L260.6 434.2M279.5 443.3L259.0 438.9M259.0 438.9L257.2 432.9M261.9 439.6L261.1 436.7M279.5 447.8L258.6 446.0M258.6 446.0L256.1 440.2M261.6 446.2L260.4 443.5M279.5 452.9L258.7 450.0M258.7 450.0L256.5 444.1M261.7 450.4L260.6 447.6M279.5 460.4L258.5 460.4M258.5 460.4L255.5 454.8M261.5 460.4L260.1 457.8M279.5 464.6L258.5 464.6M258.5 464.6L255.5 459.0M261.5 464.6L260.1 462.0M279.5 476.8L258.7 473.9M258.7 473.9L256.5 468.0M261.7 474.3L260.6 471.5M279.5 481.8L258.8 478.2M258.8 478.2L256.9 472.2M261.8 478.7L260.8 475.8M306.0 430.2L285.5 425.8M285.5 425.8L283.7 419.8M288.4 426.5L287.6 423.6M306.0 473.2L285.5 468.8M285.5 468.8L283.7 462.8M288.4 469.5L287.6 466.6M306.0 482.0L285.5 477.6M285.5 477.6L283.7 471.6M288.4 478.3L287.6 475.4M332.5 417.7L311.6 415.9M311.6 415.9L309.1 410.1M314.6 416.1L313.4 413.4M332.5 422.7L311.7 419.8M311.7 419.8L309.5 413.9M314.7 420.2L313.6 417.4M332.5 435.3L312.0 430.9M312.0 430.9L310.2 424.9M314.9 431.6L314.1 428.7M332.5 473.4L312.2 468.0M312.2 468.0L310.8 461.8M315.1 468.7L314.4 465.8M332.5 477.6L312.4 471.5M312.4 471.5L311.2 465.3M315.3 472.3L314.7 469.4M359.0 413.5L338.2 410.6M338.2 410.6L336.0 404.7M341.2 411.0L340.1 408.2M359.0 417.7L338.2 414.8M338.2 414.8L336.0 408.9M341.2 415.2L340.1 412.4M359.0 439.0L338.4 435.0M338.4 435.0L336.5 429.0M341.3 435.6L340.5 432.7M359.0 443.5L338.4 439.5M338.4 439.5L336.5 433.5M341.3 440.1L340.5 437.2M359.0 448.0L338.4 444.0M338.4 444.0L336.5 438.0M341.3 444.6L340.5 441.7M359.0 468.7L338.5 464.0M338.5 464.0L336.9 457.9M341.5 464.7L340.7 461.8M385.5 427.0L364.9 423.0M364.9 423.0L363.0 416.9M367.8 423.5L367.0 420.7M385.5 431.2L364.9 427.2M364.9 427.2L363.0 421.2M367.8 427.8L367.0 424.9M385.5 435.5L364.9 431.5M364.9 431.5L363.0 425.5M367.8 432.1L367.0 429.2M385.5 439.8L364.9 435.7M364.9 435.7L363.0 429.7M367.8 436.3L367.0 433.4M385.5 476.6L365.6 469.8M365.6 469.8L364.7 463.5M368.5 470.7L368.0 467.8M385.5 480.9L365.9 473.4M365.9 473.4L365.1 467.1M368.7 474.4L368.3 471.5M412.0 416.8L391.5 412.1M391.5 412.1L389.9 406.0M394.5 412.8L393.7 409.9M412.0 434.4L391.5 429.7M391.5 429.7L389.9 423.6M394.5 430.4L393.7 427.5M412.0 439.0L391.5 434.3M391.5 434.3L389.9 428.2M394.5 435.0L393.7 432.1M412.0 470.5L391.8 464.7M391.8 464.7L390.5 458.5M394.7 465.5L394.1 462.6M412.0 474.9L392.1 468.3M392.1 468.3L391.0 462.1M394.9 469.2L394.4 466.3M438.5 442.8L418.5 436.3M418.5 436.3L417.4 430.1M421.4 437.2L420.9 434.3M438.5 447.1L418.6 440.4M418.6 440.4L417.6 434.2M421.4 441.4L421.0 438.4M438.5 451.5L418.7 444.6M418.7 444.6L417.7 438.3M421.5 445.6L421.0 442.6M438.5 455.8L418.7 448.7M418.7 448.7L417.8 442.5M421.6 449.7L421.1 446.8M438.5 460.2L418.8 452.8M418.8 452.8L418.0 446.6M421.6 453.9L421.2 450.9M438.5 464.5L418.9 457.0M418.9 457.0L418.1 450.7M421.7 458.0L421.3 455.1M465.0 416.8L444.5 412.4M444.5 412.4L442.7 406.4M447.4 413.1L446.6 410.2M465.0 421.0L444.5 416.6M444.5 416.6L442.7 410.6M447.4 417.3L446.6 414.4M465.0 447.0L444.5 442.6M444.5 442.6L442.7 436.6M447.4 443.3L446.6 440.4M465.0 451.0L444.5 446.6M444.5 446.6L442.7 440.6M447.4 447.3L446.6 444.4M465.0 455.3L444.5 450.9M444.5 450.9L442.7 444.9M447.4 451.6L446.6 448.7M465.0 459.5L444.5 454.8M444.5 454.8L442.9 448.7M447.5 455.5L446.7 452.6M465.0 483.0L444.7 477.6M444.7 477.6L443.3 471.4M447.6 478.3L446.9 475.4M491.5 404.3L470.6 402.5M470.6 402.5L468.1 396.7M473.6 402.7L472.4 400.0M491.5 443.6L470.8 440.0M470.8 440.0L468.9 434.0M473.8 440.5L472.8 437.6M491.5 448.0L471.0 443.6M471.0 443.6L469.2 437.6M473.9 444.3L473.1 441.4M491.5 452.0L471.0 447.6M471.0 447.6L469.2 441.6M473.9 448.3L473.1 445.4M491.5 456.0L471.2 450.6M471.2 450.6L469.8 444.4M474.1 451.3L473.4 448.4M491.5 490.0L471.5 483.5M471.5 483.5L470.4 477.3M474.4 484.4L473.9 481.5M518.0 463.7L497.3 460.1M497.3 460.1L495.4 454.1M500.3 460.6L499.3 457.7M518.0 495.0L498.5 487.1M498.5 487.1L497.9 480.9M501.3 488.3L501.0 485.3M544.5 464.5L524.0 459.8M524.0 459.8L522.4 453.7M527.0 460.5L526.2 457.6M544.5 468.7L524.1 463.7M524.1 463.7L522.5 457.6M527.0 464.4L526.3 461.5M544.5 472.8L524.2 467.6M524.2 467.6L522.7 461.5M527.1 468.4L526.4 465.5M544.5 477.0L524.2 471.6M524.2 471.6L522.8 465.4M527.1 472.3L526.4 469.4M571.0 465.4L550.7 460.0M550.7 460.0L549.3 453.8M553.6 460.7L552.9 457.8M571.0 469.6L550.8 463.8M550.8 463.8L549.5 457.6M553.7 464.6L553.1 461.7M571.0 473.8L550.9 467.7M550.9 467.7L549.7 461.5M553.8 468.5L553.2 465.6M571.0 478.0L551.0 471.5M551.0 471.5L549.9 465.3M553.9 472.4L553.4 469.5M597.5 409.3L576.9 405.3M576.9 405.3L575.0 399.3M579.8 405.9L579.0 403.0M597.5 464.0L577.0 459.3M577.0 459.3L575.4 453.2M580.0 460.0L579.2 457.1M597.5 468.0L577.1 462.9M577.1 462.9L575.6 456.8M580.0 463.6L579.3 460.7M597.5 472.0L577.2 466.6M577.2 466.6L575.8 460.4M580.1 467.3L579.4 464.4M624.0 410.0L603.0 408.9M603.0 408.9L600.4 403.2M606.0 409.1L604.8 406.3M624.0 413.5L603.1 415.7M603.1 415.7L599.6 410.5M606.1 415.4L604.4 412.9M624.0 468.7L603.5 464.0M603.5 464.0L601.9 457.9M606.5 464.7L605.7 461.8M624.0 477.0L603.7 471.6M603.7 471.6L602.3 465.4M606.6 472.3L605.9 469.4M624.0 481.5L604.0 475.0M604.0 475.0L602.9 468.8M606.9 475.9L606.4 473.0M650.5 456.3L630.0 451.6M630.0 451.6L628.4 445.5M633.0 452.3L632.2 449.4M650.5 460.6L630.1 455.4M630.1 455.4L628.6 449.3M633.1 456.1L632.3 453.2M650.5 464.9L630.3 459.2M630.3 459.2L628.9 453.1M633.2 460.0L632.5 457.1M650.5 469.1L630.4 463.1M630.4 463.1L629.2 456.9M633.3 463.9L632.7 461.0M650.5 473.4L630.5 466.9M630.5 466.9L629.4 460.7M633.4 467.8L632.9 464.9M650.5 477.6L630.5 471.1M630.5 471.1L629.4 464.9M633.4 472.0L632.9 469.1M650.5 483.8L631.5 474.9M631.5 474.9L631.1 468.6M634.2 476.2L634.0 473.2M677.0 464.7L656.5 460.0M656.5 460.0L654.9 453.9M659.5 460.7L658.7 457.8M677.0 469.1L656.7 463.8M656.7 463.8L655.2 457.7M659.6 464.6L658.9 461.7M677.0 473.6L656.8 467.7M656.8 467.7L655.6 461.5M659.7 468.5L659.1 465.6M677.0 478.0L657.0 471.5M657.0 471.5L655.9 465.3M659.9 472.4L659.4 469.5"/>
<path stroke="#00ff00" d="M94.0 340.0L73.3 336.4M73.3 336.4L71.4 330.4M94.0 345.0L73.3 341.4M73.3 341.4L71.4 335.4M94.0 349.4L73.3 345.8M73.3 345.8L71.4 339.8M94.0 353.0L73.0 353.0M73.0 353.0L70.0 347.4M94.0 362.8L73.1 361.3M73.1 361.3L70.5 355.6M94.0 370.3L73.2 373.2M73.2 373.2L69.5 368.1M94.0 471.8L74.1 465.2M74.1 465.2L73.0 459.0M94.0 476.2L74.2 469.2M74.2 469.2L73.3 463.0M120.5 310.4L99.5 310.4M99.5 310.4L96.5 304.8M120.5 370.3L100.0 365.9M100.0 365.9L98.2 359.9M120.5 404.6L99.7 407.5M99.7 407.5L96.0 402.4M120.5 412.6L99.7 415.5M99.7 415.5L96.0 410.4M120.5 418.4L99.7 421.3M99.7 421.3L96.0 416.2M120.5 451.3L100.0 446.6M100.0 446.6L98.4 440.5M120.5 460.0L100.2 454.4M100.2 454.4L98.9 448.3M120.5 468.7L100.5 462.3M100.5 462.3L99.3 456.1M120.5 473.0L100.6 466.3M100.6 466.3L99.6 460.1M120.5 477.3L100.7 470.2M100.7 470.2L99.8 464.0M120.5 481.7L100.9 474.2M100.9 474.2L100.1 467.9M120.5 486.0L101.0 478.1M101.0 478.1L100.4 471.9M147.0 396.0L126.3 399.6M126.3 399.6L122.4 394.7M147.0 404.6L126.5 409.0M126.5 409.0L122.4 404.1M147.0 409.0L126.3 412.6M126.3 412.6L122.4 407.7M147.0 413.0L126.3 416.6M126.3 416.6L122.4 411.7M147.0 417.0L126.2 419.9M126.2 419.9L122.5 414.8M173.5 400.4L152.6 402.8M152.6 402.8L149.1 397.6M173.5 404.7L152.6 406.7M152.6 406.7L149.1 401.4M173.5 409.1L152.6 410.6M152.6 410.6L149.2 405.3M173.5 417.8L152.5 418.4M152.5 418.4L149.4 412.9M173.5 463.6L153.0 459.2M153.0 459.2L151.2 453.2M200.0 400.5L179.1 402.3M179.1 402.3L175.6 397.0M200.0 404.6L179.0 405.9M179.0 405.9L175.7 400.6M200.0 408.7L179.0 409.5M179.0 409.5L175.8 404.1M200.0 412.8L179.0 413.1M179.0 413.1L175.9 407.6M200.0 416.8L179.0 416.7M179.0 416.7L176.1 411.1M200.0 420.9L179.0 420.3M179.0 420.3L176.2 414.7M200.0 425.0L179.0 423.9M179.0 423.9L176.4 418.2M200.0 477.0L179.3 473.4M179.3 473.4L177.4 467.4M200.0 480.5L179.3 476.9M179.3 476.9L177.4 470.9M253.0 499.4L236.3 484.3M236.3 484.3L237.8 478.2M279.5 323.5L258.8 319.9M258.8 319.9L256.9 313.9M279.5 345.2L258.7 342.3M258.7 342.3L256.5 336.4M279.5 503.5L264.1 489.2M264.1 489.2L265.8 483.1M306.0 332.7L285.1 330.9M285.1 330.9L282.6 325.1M306.0 435.3L285.5 430.9M285.5 430.9L283.7 424.9M306.0 439.5L285.7 434.1M285.7 434.1L284.3 427.9M306.0 443.3L285.7 437.9M285.7 437.9L284.3 431.7M332.5 327.7L311.8 324.1M311.8 324.1L309.9 318.1M332.5 426.9L311.8 423.3M311.8 423.3L309.9 417.3M332.5 431.0L312.0 426.6M312.0 426.6L310.2 420.6M359.0 421.8L338.2 418.9M338.2 418.9L336.0 413.0M359.0 430.0L338.4 426.0M338.4 426.0L336.5 420.0M359.0 434.5L338.4 430.5M338.4 430.5L336.5 424.5M359.0 473.0L339.0 466.5M339.0 466.5L337.9 460.3M359.0 477.3L339.3 470.0M339.3 470.0L338.5 463.8M359.0 481.7L339.6 473.6M339.6 473.6L339.0 467.3M359.0 486.0L339.5 478.1M339.5 478.1L338.9 471.9M385.5 485.2L365.8 478.0M365.8 478.0L364.9 471.8M385.5 489.5L366.0 481.6M366.0 481.6L365.4 475.4M412.0 479.2L392.3 471.9M392.3 471.9L391.5 465.6M412.0 483.6L392.2 476.5M392.2 476.5L391.3 470.3M412.0 488.0L392.5 480.1M392.5 480.1L391.9 473.9M438.5 468.7L419.2 460.5M419.2 460.5L418.6 454.2M438.5 473.0L419.4 464.3M419.4 464.3L419.0 458.0M438.5 477.2L419.6 468.1M419.6 468.1L419.4 461.8M438.5 481.5L419.8 471.9M419.8 471.9L419.7 465.6M438.5 485.7L419.6 476.7M419.6 476.7L419.3 470.4M438.5 490.0L419.8 480.5M419.8 480.5L419.7 474.2M465.0 464.5L444.7 459.1M444.7 459.1L443.3 452.9M465.0 468.7L445.0 462.2M445.0 462.2L443.9 456.0M465.0 487.6L445.3 480.4M445.3 480.4L444.4 474.2M465.0 491.8L445.5 483.9M445.5 483.9L444.9 477.7M491.5 494.3L471.8 487.1M471.8 487.1L470.9 480.9M544.5 496.0L526.3 485.5M526.3 485.5L526.5 479.2M571.0 482.0L551.3 474.8M551.3 474.8L550.4 468.6M571.0 486.0L552.0 477.1M552.0 477.1L551.6 470.8M597.5 476.2L577.5 469.7M577.5 469.7L576.4 463.5M597.5 480.4L578.0 472.6M578.0 472.6L577.3 466.4M597.5 484.6L578.1 476.6M578.1 476.6L577.5 470.3M597.5 488.8L578.7 479.5M578.7 479.5L578.5 473.2M597.5 493.0L579.3 482.5M579.3 482.5L579.5 476.2M650.5 409.8L629.6 407.6M629.6 407.6L627.3 401.8M677.0 413.8L656.4 409.8M656.4 409.8L654.5 403.8"/>
<path stroke="#00ffff" d="M94.0 480.6L74.4 473.2M74.4 473.2L73.6 466.9M94.0 485.0L74.5 477.1M74.5 477.1L73.9 470.9M94.0 489.0L75.0 480.1M75.0 480.1L74.6 473.8M120.5 319.3L99.5 319.3M99.5 319.3L96.5 313.7M120.5 322.6L99.6 320.8M99.6 320.8L97.1 315.0M120.5 326.8L100.2 321.4M100.2 321.4L98.8 315.2M120.5 490.0L105.9 474.9M105.9 474.9L107.8 468.9M120.5 494.3L108.9 476.8M108.9 476.8L111.9 471.3M147.0 498.0L144.1 477.2M144.1 477.2L149.2 473.5M147.0 502.6L138.7 483.3M138.7 483.3L142.6 478.4M147.0 507.2L139.4 487.7M139.4 487.7L143.5 482.9M147.0 511.9L138.0 492.9M138.0 492.9L141.7 487.9M147.0 516.5L134.4 499.7M134.4 499.7L137.0 494.0M147.0 520.0L136.0 502.1M136.0 502.1L139.2 496.7M147.0 524.5L141.4 504.3M141.4 504.3L146.0 499.9M173.5 494.0L160.7 477.3M160.7 477.3L163.3 471.6M173.5 498.3L160.6 481.8M160.6 481.8L163.2 476.0M173.5 507.0L160.8 490.3M160.8 490.3L163.5 484.5M173.5 511.3L159.5 495.7M159.5 495.7L161.7 489.7M173.5 515.7L162.2 497.9M162.2 497.9L165.3 492.5M173.5 520.0L161.0 503.1M161.0 503.1L163.7 497.4M173.5 524.0L160.8 507.3M160.8 507.3L163.4 501.6M200.0 392.0L179.5 387.6M179.5 387.6L177.7 381.6M200.0 396.8L179.0 396.8M179.0 396.8L176.0 391.2M226.5 327.2L205.6 325.4M205.6 325.4L203.1 319.6M226.5 507.7L212.3 492.2M212.3 492.2L214.4 486.3M253.0 336.9L232.7 331.5M232.7 331.5L231.3 325.3M253.0 341.0L232.5 336.6M232.5 336.6L230.7 330.6M253.0 345.2L232.5 340.8M232.5 340.8L230.7 334.8M253.0 505.0L237.2 491.2M237.2 491.2L238.7 485.0M253.0 510.0L240.0 493.5M240.0 493.5L242.5 487.8M253.0 515.0L238.3 500.0M238.3 500.0L240.2 494.0M279.5 336.9L259.0 332.5M259.0 332.5L257.2 326.5M279.5 341.0L258.8 337.4M258.8 337.4L256.9 331.4M279.5 507.0L262.7 494.3M262.7 494.3L263.7 488.1M279.5 511.5L266.3 495.2M266.3 495.2L268.7 489.4M279.5 516.0L266.1 499.9M266.1 499.9L268.4 494.0M306.0 319.3L285.0 319.3M285.0 319.3L282.0 313.7M306.0 323.5L285.0 323.5M285.0 323.5L282.0 317.9M306.0 327.2L285.0 326.1M285.0 326.1L282.4 320.4M332.5 498.5L319.1 482.3M319.1 482.3L321.5 476.5M332.5 502.8L317.3 488.2M317.3 488.2L319.0 482.2M332.5 507.0L318.0 491.8M318.0 491.8L320.0 485.8M359.0 490.0L340.1 480.8M340.1 480.8L339.9 474.5M359.0 494.4L341.2 483.2M341.2 483.2L341.7 476.9M359.0 498.7L342.1 486.3M342.1 486.3L343.0 480.0M385.5 493.5L367.5 482.7M367.5 482.7L367.8 476.4M385.5 497.9L368.8 485.3M368.8 485.3L369.8 479.0M385.5 502.4L369.3 489.1M369.3 489.1L370.5 482.9M412.0 492.0L393.6 481.9M393.6 481.9L393.7 475.6M412.0 496.2L394.7 484.2M394.7 484.2L395.5 478.0M412.0 500.4L395.4 487.5M395.4 487.5L396.5 481.3M412.0 504.6L396.2 490.7M396.2 490.7L397.7 484.6M465.0 496.0L446.0 487.1M446.0 487.1L445.6 480.8M491.5 486.0L492.2 465.0M492.2 465.0L497.9 462.3M491.5 476.0L492.2 455.0M492.2 455.0L497.9 452.3M491.5 497.7L472.5 488.8M472.5 488.8L472.1 482.5M491.5 501.9L472.9 492.2M472.9 492.2L472.8 485.9M491.5 506.0L473.3 495.5M473.3 495.5L473.5 489.2M518.0 499.4L499.8 488.9M499.8 488.9L500.0 482.6M544.5 491.0L526.3 480.5M526.3 480.5L526.5 474.2M544.5 499.5L526.7 488.4M526.7 488.4L527.1 482.1M544.5 503.5L527.3 491.5M527.3 491.5L528.1 485.2M571.0 490.0L552.8 479.5M552.8 479.5L553.0 473.2M571.0 494.0L553.2 482.9M553.2 482.9L553.6 476.6M571.0 498.5L553.8 486.5M553.8 486.5L554.6 480.2M597.5 502.0L580.3 490.0M580.3 490.0L581.1 483.7M624.0 486.0L605.0 477.1M605.0 477.1L604.6 470.8M624.0 491.0L605.8 480.5M605.8 480.5L606.0 474.2M624.0 496.0L606.4 484.6M606.4 484.6L606.9 478.3M650.5 494.3L633.7 481.7M633.7 481.7L634.7 475.4M650.5 499.4L633.7 486.7M633.7 486.7L634.7 480.5M650.5 504.4L633.7 491.8M633.7 491.8L634.7 485.5M677.0 496.0L659.8 484.0M659.8 484.0L660.6 477.7M677.0 499.7L660.0 487.3M660.0 487.3L660.9 481.1M677.0 503.3L660.2 490.7M660.2 490.7L661.2 484.5M677.0 507.0L661.8 492.6M661.8 492.6L663.4 486.5M703.5 482.6L704.6 461.6M704.6 461.6L710.3 459.0"/>
<path stroke="#0000ff" d="M94.0 493.5L75.8 483.0M75.8 483.0L75.9 480.0M94.0 498.0L76.8 486.0M76.8 486.0L77.2 483.0M94.0 502.0L81.4 485.2M81.4 485.2L82.7 482.5M94.0 506.4L79.6 491.2M79.6 491.2L80.6 488.3M94.0 510.9L82.7 493.2M82.7 493.2L84.2 490.6M94.0 515.4L85.1 496.3M85.1 496.3L86.9 493.9M94.0 519.8L83.2 501.8M83.2 501.8L84.7 499.2M94.0 524.2L87.3 504.3M87.3 504.3L89.4 502.2M120.5 497.0L110.0 478.8M110.0 478.8L111.6 476.3M120.5 501.0L108.0 484.1M108.0 484.1L109.3 481.4M120.5 505.0L107.6 488.5M107.6 488.5L108.8 485.7M120.5 509.0L109.7 491.0M109.7 491.0L111.2 488.4M120.5 513.0L111.7 493.9M111.7 493.9L113.5 491.6M120.5 517.0L110.8 498.4M110.8 498.4L112.5 495.9M120.5 521.0L109.5 503.1M109.5 503.1L111.0 500.5M120.5 525.2L111.3 506.4M111.3 506.4L113.0 504.0M147.0 486.0L153.0 471.2M153.0 471.2L156.0 470.9M147.0 529.0L140.1 509.2M140.1 509.2L142.1 507.0M173.5 488.0L169.2 467.4M169.2 467.4L171.5 465.5M173.5 502.7L163.2 484.4M163.2 484.4L164.8 481.8M173.5 528.5L165.5 509.1M165.5 509.1L167.5 506.8M173.5 533.0L169.4 512.4M169.4 512.4L171.7 510.5M200.0 494.0L189.5 475.8M189.5 475.8L191.1 473.3M200.0 498.5L188.3 481.0M188.3 481.0L189.7 478.4M200.0 503.0L187.9 485.8M187.9 485.8L189.3 483.1M200.0 507.5L191.8 488.2M191.8 488.2L193.7 485.8M200.0 512.0L189.3 493.9M189.3 493.9L190.9 491.4M200.0 516.5L190.7 497.7M190.7 497.7L192.4 495.2M200.0 521.0L193.6 501.0M193.6 501.0L195.7 498.8M200.0 525.5L190.6 506.7M190.6 506.7L192.4 504.3M200.0 530.0L193.8 509.9M193.8 509.9L195.9 507.8M200.0 534.0L196.7 513.3M196.7 513.3L199.1 511.5M226.5 503.0L214.2 486.0M214.2 486.0L215.5 483.3M226.5 507.6L213.0 491.5M213.0 491.5L214.1 488.7M226.5 512.1L217.4 493.2M217.4 493.2L219.2 490.8M226.5 516.7L215.6 498.8M215.6 498.8L217.1 496.2M226.5 521.3L217.3 502.4M217.3 502.4L219.1 500.0M226.5 525.9L220.4 505.8M220.4 505.8L222.6 503.6M226.5 530.4L217.9 511.3M217.9 511.3L219.7 508.9M226.5 535.0L222.5 514.4M222.5 514.4L224.9 512.5M253.0 494.0L254.1 473.0M254.1 473.0L256.8 471.8M253.0 488.0L256.6 467.3M256.6 467.3L259.5 466.4M253.0 484.0L258.4 463.7M258.4 463.7L261.4 463.0M253.0 517.0L242.8 498.6M242.8 498.6L244.4 496.1M253.0 521.5L241.4 504.0M241.4 504.0L242.9 501.3M253.0 526.0L243.6 507.2M243.6 507.2L245.3 504.8M253.0 530.5L247.7 510.2M247.7 510.2L249.9 508.1M253.0 535.0L245.7 515.3M245.7 515.3L247.7 513.1M279.5 494.0L281.3 473.1M281.3 473.1L284.1 471.9M279.5 518.0L268.5 500.1M268.5 500.1L270.1 497.5M279.5 522.2L270.3 503.4M270.3 503.4L272.1 501.0M279.5 526.5L268.9 508.4M268.9 508.4L270.5 505.8M279.5 530.8L271.7 511.2M271.7 511.2L273.7 508.9M279.5 535.0L276.2 514.3M276.2 514.3L278.6 512.5M306.0 489.0L312.1 468.9M312.1 468.9L315.1 468.3M306.0 505.0L290.9 490.4M290.9 490.4L291.7 487.5M306.0 509.3L293.8 492.2M293.8 492.2L295.1 489.5M306.0 513.6L296.3 494.9M296.3 494.9L298.0 492.5M306.0 517.9L294.5 500.3M294.5 500.3L295.9 497.7M306.0 522.1L295.9 503.7M295.9 503.7L297.5 501.2M306.0 526.4L300.1 506.3M300.1 506.3L302.2 504.2M306.0 530.7L299.3 510.8M299.3 510.8L301.3 508.6M306.0 535.0L298.6 515.4M298.6 515.4L300.6 513.1M332.5 510.0L318.8 494.1M318.8 494.1L319.9 491.3M332.5 514.2L322.2 495.9M322.2 495.9L323.8 493.3M332.5 518.3L324.3 499.0M324.3 499.0L326.2 496.7M332.5 522.5L322.7 503.9M322.7 503.9L324.3 501.5M332.5 526.7L323.1 507.9M323.1 507.9L324.8 505.5M332.5 530.8L327.1 510.5M327.1 510.5L329.3 508.5M332.5 535.0L328.7 514.3M328.7 514.3L331.1 512.5M359.0 503.1L345.6 486.9M345.6 486.9L346.7 484.1M359.0 507.4L344.7 492.0M344.7 492.0L345.7 489.2M359.0 511.8L346.2 495.2M346.2 495.2L347.4 492.4M359.0 516.1L350.5 497.0M350.5 497.0L352.3 494.6M359.0 520.5L349.5 501.8M349.5 501.8L351.2 499.3M385.5 506.8L371.4 491.2M371.4 491.2L372.4 488.4M385.5 511.2L375.3 492.9M375.3 492.9L376.9 490.4M385.5 515.7L373.5 498.5M373.5 498.5L374.8 495.8M385.5 520.1L376.1 501.3M376.1 501.3L377.8 498.9M385.5 524.6L379.8 504.3M379.8 504.3L382.0 502.3M412.0 508.8L400.2 491.4M400.2 491.4L401.6 488.7M412.0 513.0L401.9 494.6M401.9 494.6L403.5 492.1M412.0 517.1L400.4 499.7M400.4 499.7L401.8 497.0M412.0 521.3L402.2 502.8M402.2 502.8L403.9 500.3M438.5 494.0L420.6 483.0M420.6 483.0L420.8 480.0M438.5 498.4L421.9 485.5M421.9 485.5L422.4 482.6M438.5 502.8L422.2 489.5M422.2 489.5L422.8 486.5M438.5 507.2L426.6 489.9M426.6 489.9L428.0 487.2M438.5 511.6L426.4 494.4M426.4 494.4L427.8 491.7M438.5 516.0L426.4 498.8M426.4 498.8L427.8 496.1M438.5 520.3L431.2 500.7M431.2 500.7L433.2 498.4M465.0 500.0L448.3 487.3M448.3 487.3L448.7 484.4M465.0 504.2L449.2 490.4M449.2 490.4L449.9 487.5M465.0 508.5L453.3 491.0M453.3 491.0L454.7 488.4M465.0 512.7L454.4 494.6M454.4 494.6L456.0 492.0M491.5 510.0L480.6 492.0M480.6 492.0L482.2 489.5M491.5 514.0L481.6 495.5M481.6 495.5L483.3 493.0M491.5 518.1L480.5 500.2M480.5 500.2L482.0 497.6M518.0 483.0L514.6 462.3M514.6 462.3L517.0 460.5M518.0 503.5L501.7 490.3M501.7 490.3L502.2 487.4M518.0 507.8L505.4 491.0M505.4 491.0L506.6 488.3M518.0 512.1L507.7 493.8M507.7 493.8L509.3 491.3M518.0 516.4L506.0 499.2M506.0 499.2L507.4 496.5M518.0 520.7L508.7 501.9M508.7 501.9L510.5 499.5M544.5 507.0L532.1 490.0M532.1 490.0L533.4 487.3M544.5 511.4L530.9 495.4M530.9 495.4L532.0 492.6M544.5 515.8L534.5 497.4M534.5 497.4L536.2 494.9M571.0 500.0L553.7 488.1M553.7 488.1L554.1 485.1M571.0 504.2L557.4 488.3M557.4 488.3L558.5 485.5M571.0 508.5L559.2 491.1M559.2 491.1L560.6 488.5M571.0 512.7L558.0 496.2M558.0 496.2L559.2 493.5M571.0 516.9L560.1 499.0M560.1 499.0L561.6 496.4M571.0 521.1L564.2 501.3M564.2 501.3L566.2 499.1M597.5 490.0L597.4 469.0M597.4 469.0L600.0 467.6M597.5 497.0L580.5 484.7M580.5 484.7L580.9 481.7M597.5 501.1L580.4 488.9M580.4 488.9L580.8 485.9M597.5 505.2L582.9 490.1M582.9 490.1L583.9 487.3M597.5 509.4L586.6 491.4M586.6 491.4L588.1 488.8M597.5 513.5L586.7 495.5M586.7 495.5L588.3 492.9M597.5 517.6L585.7 500.2M585.7 500.2L587.1 497.6M597.5 521.7L588.2 502.9M588.2 502.9L590.0 500.4M624.0 500.0L607.4 487.1M607.4 487.1L607.9 484.1M624.0 504.2L611.0 487.7M611.0 487.7L612.2 485.0M650.5 490.5L646.4 469.9M646.4 469.9L648.7 468.0M650.5 508.0L636.5 492.3M636.5 492.3L637.5 489.5M650.5 512.3L640.7 493.7M640.7 493.7L642.4 491.2M677.0 494.0L677.7 473.0M677.7 473.0L680.4 471.7M677.0 487.0L678.8 466.1M678.8 466.1L681.6 464.9M677.0 511.0L666.1 493.0M666.1 493.0L667.7 490.5M677.0 515.5L664.5 498.6M664.5 498.6L665.8 495.9M703.5 503.5L699.3 482.9M699.3 482.9L701.6 481.0M703.5 495.0L705.0 474.1M705.0 474.1L707.7 472.8M703.5 507.7L687.5 494.1M687.5 494.1L688.1 491.2M703.5 512.1L689.8 496.2M689.8 496.2L690.9 493.4M703.5 516.5L687.7 502.7M687.7 502.7L688.3 499.8"/>
<path stroke="#6495ed" d="M94.0 528.7L89.1 508.3M89.1 508.3L91.3 506.3M94.0 533.1L87.3 513.2M87.3 513.2L89.4 511.1M120.5 529.5L115.4 509.1M115.4 509.1L117.6 507.1M120.5 533.8L114.5 513.6M114.5 513.6L116.7 511.5M200.0 484.0L205.4 463.7M205.4 463.7L208.4 463.0M200.0 488.0L206.3 468.0M206.3 468.0L209.3 467.4M200.0 492.0L207.2 472.3M207.2 472.3L210.2 471.8M200.0 496.0L208.0 476.6M208.0 476.6L211.0 476.3M200.0 500.0L208.9 481.0M208.9 481.0L211.9 480.8M200.0 538.0L196.8 517.2M196.8 517.2L199.2 515.4M226.5 483.5L239.1 466.7M239.1 466.7L242.1 467.2M226.5 490.0L228.3 469.1M228.3 469.1L231.1 467.9M226.5 496.0L228.3 475.1M228.3 475.1L231.1 473.9M226.5 503.0L227.2 482.0M227.2 482.0L229.9 480.7M226.5 538.0L225.4 517.0M225.4 517.0L228.0 515.5M226.5 542.0L226.5 521.0M226.5 521.0L229.1 519.6M253.0 538.0L250.0 517.2M250.0 517.2L252.5 515.4M253.0 542.0L253.0 521.0M253.0 521.0L255.6 519.6M279.5 538.0L279.4 517.0M279.4 517.0L282.1 515.6M279.5 542.0L279.5 521.0M279.5 521.0L282.1 519.6M306.0 503.0L305.3 482.0M305.3 482.0L307.9 480.5M306.0 497.0L307.8 476.1M307.8 476.1L310.6 474.9M306.0 492.0L311.4 471.7M311.4 471.7L314.4 471.0M306.0 538.0L302.1 517.4M302.1 517.4L304.4 515.5M306.0 542.0L306.0 521.0M306.0 521.0L308.6 519.6M332.5 538.0L332.9 517.0M332.9 517.0L335.5 515.6M332.5 542.0L331.8 521.0M331.8 521.0L334.4 519.5M359.0 524.9L350.0 505.9M350.0 505.9L351.8 503.5M359.0 529.2L355.3 508.6M355.3 508.6L357.6 506.7M359.0 533.6L355.3 512.9M355.3 512.9L357.7 511.1M385.5 529.0L378.0 509.4M378.0 509.4L380.0 507.1M385.5 533.4L381.8 512.8M381.8 512.8L384.1 510.9M412.0 525.5L406.7 505.2M406.7 505.2L408.9 503.2M412.0 529.7L407.3 509.3M407.3 509.3L409.5 507.3M412.0 533.9L406.3 513.7M406.3 513.7L408.4 511.6M438.5 524.7L431.0 505.1M431.0 505.1L433.0 502.9M438.5 529.1L431.0 509.5M431.0 509.5L433.0 507.3M438.5 533.5L436.5 512.6M436.5 512.6L439.0 511.0M465.0 516.9L453.0 499.7M453.0 499.7L454.4 497.0M465.0 521.1L455.9 502.2M455.9 502.2L457.6 499.8M465.0 525.4L459.9 505.0M459.9 505.0L462.1 503.0M465.0 529.6L459.1 509.5M459.1 509.5L461.2 507.4M465.0 533.8L459.4 513.6M459.4 513.6L461.5 511.5M491.5 522.1L481.3 503.8M481.3 503.8L482.9 501.3M491.5 526.1L485.2 506.1M485.2 506.1L487.3 504.0M491.5 530.2L488.4 509.4M488.4 509.4L490.8 507.6M518.0 525.1L512.7 504.7M512.7 504.7L514.9 502.7M518.0 529.4L511.4 509.4M511.4 509.4L513.5 507.3M544.5 483.0L547.8 462.3M547.8 462.3L550.6 461.3M544.5 520.2L536.7 500.7M536.7 500.7L538.7 498.4M544.5 524.6L535.0 505.9M535.0 505.9L536.7 503.5M544.5 529.1L539.5 508.7M539.5 508.7L541.7 506.7M544.5 533.5L542.1 512.6M542.1 512.6L544.6 510.9M544.5 537.9L540.4 517.3M540.4 517.3L542.7 515.4M571.0 525.4L563.8 505.6M563.8 505.6L565.8 503.4M571.0 529.6L563.5 510.0M563.5 510.0L565.4 507.7M597.5 525.8L592.4 505.5M592.4 505.5L594.7 503.4M597.5 529.9L593.0 509.4M593.0 509.4L595.3 507.5M624.0 508.5L610.9 492.0M610.9 492.0L612.1 489.3M624.0 512.7L610.7 496.4M610.7 496.4L611.9 493.7M624.0 516.9L614.5 498.2M614.5 498.2L616.2 495.7M624.0 521.1L616.9 501.4M616.9 501.4L618.9 499.2M624.0 525.4L615.4 506.2M615.4 506.2L617.2 503.9M624.0 529.6L617.3 509.7M617.3 509.7L619.3 507.5M650.5 516.6L640.0 498.4M640.0 498.4L641.6 495.8M650.5 520.9L639.8 502.8M639.8 502.8L641.3 500.2M650.5 525.1L644.5 505.0M644.5 505.0L646.6 502.9M650.5 529.4L646.2 508.9M646.2 508.9L648.5 507.0M650.5 533.7L644.7 513.5M644.7 513.5L646.9 511.4M677.0 519.9L668.9 500.6M668.9 500.6L670.8 498.2M677.0 524.4L670.0 504.6M670.0 504.6L672.1 502.4M677.0 528.9L669.2 509.4M669.2 509.4L671.2 507.1M677.0 533.4L674.9 512.5M674.9 512.5L677.4 510.8M703.5 520.0L692.6 502.1M692.6 502.1L694.1 499.5M703.5 524.5L696.2 504.8M696.2 504.8L698.1 502.5M703.5 528.9L699.3 508.3M699.3 508.3L701.6 506.4M703.5 533.4L697.6 513.2M697.6 513.2L699.7 511.1"/>
<path stroke="#a020f0" d="M94.0 537.6L90.9 516.8M90.9 516.8L93.3 515.0M94.0 542.0L92.5 521.1M92.5 521.1L95.0 519.5M120.5 336.0L113.3 316.3M113.3 316.3L115.3 314.0M120.5 538.0L115.8 517.5M115.8 517.5L118.0 515.6M120.5 542.2L117.0 521.5M117.0 521.5L119.4 519.7M147.0 532.0L145.2 511.1M145.2 511.1L147.7 509.4M147.0 536.0L148.8 515.1M148.8 515.1L151.6 513.9M147.0 541.0L150.6 520.3M150.6 520.3L153.5 519.4M173.5 537.0L169.9 516.3M169.9 516.3L172.2 514.5M173.5 541.0L171.7 520.1M171.7 520.1L174.2 518.4M200.0 542.0L200.0 521.0M200.0 521.0L202.6 519.6M200.0 545.0L202.9 524.2M202.9 524.2L205.7 523.2M226.5 545.0L228.3 524.1M228.3 524.1L231.1 522.9M253.0 545.0L254.8 524.1M254.8 524.1L257.6 522.9M279.5 486.0L282.1 465.2M282.1 465.2L284.9 464.1M279.5 545.0L280.2 524.0M280.2 524.0L282.9 522.7M306.0 546.0L307.1 525.0M307.1 525.0L309.8 523.8M332.5 546.0L333.2 525.0M333.2 525.0L335.9 523.7M359.0 537.9L357.0 517.0M357.0 517.0L359.5 515.4M359.0 542.3L358.3 521.3M358.3 521.3L360.9 519.8M359.0 546.5L362.6 525.8M362.6 525.8L365.5 524.9M385.5 537.9L383.5 517.0M383.5 517.0L386.0 515.3M385.5 542.3L384.8 521.3M384.8 521.3L387.4 519.8M385.5 546.5L387.7 525.6M387.7 525.6L390.5 524.5M412.0 538.1L410.1 517.2M410.1 517.2L412.6 515.6M412.0 542.3L411.3 521.3M411.3 521.3L413.9 519.8M412.0 546.5L414.6 525.7M414.6 525.7L417.4 524.6M438.5 537.9L436.5 517.0M436.5 517.0L439.0 515.4M438.5 542.3L437.8 521.3M437.8 521.3L440.4 519.8M438.5 546.5L440.3 525.6M440.3 525.6L443.1 524.4M465.0 538.1L463.1 517.2M463.1 517.2L465.6 515.5M465.0 542.3L464.3 521.3M464.3 521.3L466.9 519.8M465.0 546.5L465.7 525.5M465.7 525.5L468.4 524.2M491.5 534.2L488.0 513.5M488.0 513.5L490.4 511.7M491.5 538.3L489.7 517.3M489.7 517.3L492.2 515.7M491.5 542.3L490.8 521.3M490.8 521.3L493.4 519.8M491.5 546.5L492.2 525.5M492.2 525.5L494.9 524.2M518.0 533.7L514.3 513.0M514.3 513.0L516.6 511.2M518.0 538.0L516.1 517.1M516.1 517.1L518.6 515.4M518.0 542.3L517.3 521.3M517.3 521.3L519.9 519.8M544.5 542.3L543.8 521.3M543.8 521.3L546.4 519.8M544.5 546.5L544.5 525.5M544.5 525.5L547.1 524.1M571.0 533.8L567.3 513.2M567.3 513.2L569.7 511.3M571.0 538.1L569.1 517.2M569.1 517.2L571.6 515.5M571.0 542.3L570.3 521.3M570.3 521.3L572.9 519.8M571.0 546.5L572.1 525.5M572.1 525.5L574.8 524.3M597.5 534.1L593.9 513.4M593.9 513.4L596.3 511.5M597.5 538.2L595.6 517.3M595.6 517.3L598.2 515.6M597.5 542.3L596.8 521.3M596.8 521.3L599.4 519.8M597.5 546.5L598.2 525.5M598.2 525.5L600.9 524.2M624.0 533.8L620.3 513.2M620.3 513.2L622.7 511.3M624.0 538.1L622.1 517.2M622.1 517.2L624.6 515.5M624.0 542.3L623.3 521.3M623.3 521.3L625.9 519.8M624.0 546.5L624.0 525.5M624.0 525.5L626.6 524.1M650.5 538.0L648.6 517.1M648.6 517.1L651.1 515.5M650.5 542.3L649.8 521.3M649.8 521.3L652.4 519.8M650.5 546.5L650.5 525.5M650.5 525.5L653.1 524.1M677.0 537.8L675.0 516.9M675.0 516.9L677.5 515.3M677.0 542.3L676.3 521.3M676.3 521.3L678.9 519.8M677.0 546.5L677.0 525.5M677.0 525.5L679.6 524.1M703.5 537.8L701.5 516.9M701.5 516.9L704.0 515.3M703.5 542.3L702.8 521.3M702.8 521.3L705.4 519.8M703.5 546.5L702.8 525.5M702.8 525.5L705.4 524.0"/>
<path stroke="#a020f0" d="M253.0 546.5L265.6 529.7M306.0 546.5L317.1 528.7M359.0 546.5L369.5 528.3M385.5 546.5L392.7 526.8M412.0 546.5L417.4 526.2"/>
<path stroke="#ee82ee" d="M94.0 546.5L94.0 525.5M120.5 546.5L118.3 525.6M120.5 546.5L125.6 526.1M147.0 546.5L163.1 533.0M173.5 546.5L164.6 527.5M200.0 546.5L207.9 527.0M226.5 546.5L240.6 530.9M279.5 546.5L286.7 526.8M332.5 546.5L343.9 528.9M385.5 546.5L396.9 528.9M412.0 546.5L425.2 530.2M438.5 546.5L448.4 528.0M438.5 546.5L457.0 536.6M465.0 546.5L468.6 525.8M491.5 546.5L504.7 530.2M518.0 546.5L517.3 525.5M518.0 546.5L520.9 525.7M544.5 546.5L546.3 525.6M544.5 546.5L554.7 528.1M571.0 546.5L586.1 531.9M597.5 546.5L608.9 528.9M624.0 546.5L631.2 526.8M650.5 546.5L653.8 525.8M677.0 546.5L678.8 525.6M677.0 546.5L681.0 525.9M703.5 546.5L711.7 527.2M703.5 546.5L718.3 531.7"/>
</g>
</svg>
</body></html>
